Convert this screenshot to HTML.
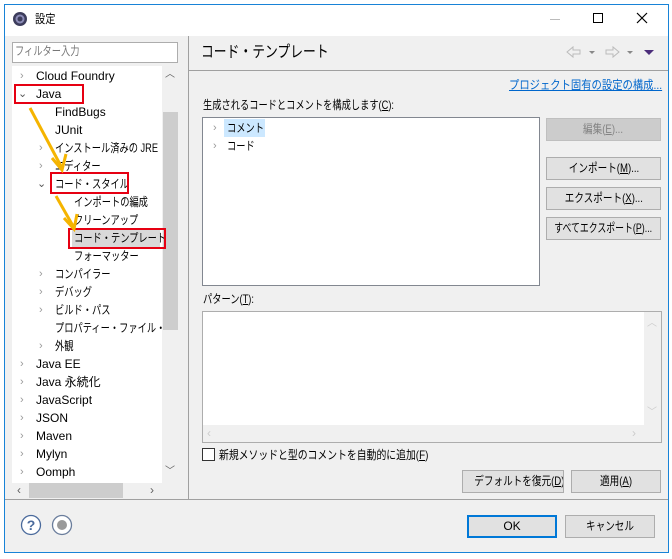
<!DOCTYPE html>
<html><head><meta charset="utf-8"><style>
*{margin:0;padding:0;box-sizing:border-box}
body{width:672px;height:559px;background:#fff;position:relative;overflow:hidden;font-family:"Liberation Sans","Noto Sans CJK JP",sans-serif;font-size:12px;color:#000}
.a{position:absolute}
.win{left:4px;top:4px;width:665px;height:549px;border:1px solid #1883d7;background:#f0f0f0}
.btn{position:absolute;background:#e1e1e1;border:1px solid #adadad;text-align:center;line-height:20px;font-size:12px;white-space:nowrap;overflow:hidden}
.btn span{display:inline-block;transform:scaleX(.8);transform-origin:center}
.t{position:absolute;white-space:nowrap;line-height:18px;transform:scaleX(.77);transform-origin:left}
.l{transform:none}
.ch{position:absolute;color:#999;font-size:11px;line-height:18px}
.rb{position:absolute;border:2px solid #e60012}
u{text-decoration:underline}
</style></head><body>
<div class="a win"></div>
<div class="a" style="left:5px;top:5px;width:663px;height:31px;background:#fff"></div>
<svg class="a" style="left:12px;top:11px" width="16" height="16"><circle cx="8" cy="8" r="7" fill="#3d3d5c"/><circle cx="8" cy="8" r="4.5" fill="#8d8db8"/><circle cx="8" cy="8" r="2.5" fill="#3d3d5c"/></svg>
<div class="t" style="left:35px;top:10px;transform:scaleX(.85)">設定</div>
<div class="a" style="left:550px;top:19px;width:10px;height:1px;background:#bbb"></div>
<div class="a" style="left:593px;top:13px;width:10px;height:10px;border:1px solid #000"></div>
<svg class="a" style="left:636px;top:12px" width="12" height="12"><path d="M1 1L11 11M11 1L1 11" stroke="#000" stroke-width="1.2"/></svg>
<!-- left -->
<div class="a" style="left:12px;top:42px;width:166px;height:21px;border:1px solid #adadad;background:#fff"></div>
<div class="t" style="left:15px;top:42px;color:#777">フィルター入力</div>
<div class="a" style="left:12px;top:66px;width:150px;height:417px;background:#fff"></div>
<div class="a" style="left:162px;top:66px;width:16px;height:417px;background:#f0f0f0"></div>
<div class="a" style="left:163px;top:112px;width:15px;height:218px;background:#cdcdcd"></div>
<div class="t l" style="left:165px;top:66px;color:#606060;font-size:10px">︿</div>
<div class="t l" style="left:165px;top:463px;color:#606060;font-size:10px">﹀</div>
<div class="a" style="left:12px;top:483px;width:166px;height:15px;background:#f0f0f0"></div>
<div class="a" style="left:29px;top:483px;width:94px;height:15px;background:#cdcdcd"></div>
<div class="t l" style="left:17px;top:481px;color:#606060">‹</div>
<div class="t l" style="left:150px;top:481px;color:#606060">›</div>
<div class="a" style="left:188px;top:36px;width:1px;height:463px;background:#a0a0a0"></div>
<div class="ch" style="left:20px;top:67px">›</div><div class="t l" style="left:36px;top:67px">Cloud Foundry</div>
<div class="ch" style="left:18px;top:85px;color:#555">⌄</div><div class="t l" style="left:36px;top:85px">Java</div>
<div class="t l" style="left:55px;top:103px">FindBugs</div>
<div class="t l" style="left:55px;top:121px">JUnit</div>
<div class="ch" style="left:39px;top:139px">›</div><div class="t" style="left:55px;top:139px">インストール済みの JRE</div>
<div class="ch" style="left:39px;top:157px">›</div><div class="t" style="left:55px;top:157px">エディター</div>
<div class="ch" style="left:37px;top:175px;color:#555">⌄</div><div class="t" style="left:55px;top:175px">コード・スタイル</div>
<div class="t" style="left:74px;top:193px">インポートの編成</div>
<div class="t" style="left:74px;top:211px">クリーンアップ</div>
<div class="a" style="left:72px;top:230px;width:88px;height:17px;background:#d9d9d9"></div>
<div class="t" style="left:74px;top:229px">コード・テンプレート</div>
<div class="t" style="left:74px;top:247px">フォーマッター</div>
<div class="ch" style="left:39px;top:265px">›</div><div class="t" style="left:55px;top:265px">コンパイラー</div>
<div class="ch" style="left:39px;top:283px">›</div><div class="t" style="left:55px;top:283px">デバッグ</div>
<div class="ch" style="left:39px;top:301px">›</div><div class="t" style="left:55px;top:301px">ビルド・パス</div>
<div class="t" style="left:55px;top:319px;width:139px;overflow:hidden">プロパティー・ファイル・エディター</div>
<div class="ch" style="left:39px;top:337px">›</div><div class="t" style="left:55px;top:337px">外観</div>
<div class="ch" style="left:20px;top:355px">›</div><div class="t l" style="left:36px;top:355px">Java EE</div>
<div class="ch" style="left:20px;top:373px">›</div><div class="t l" style="left:36px;top:373px">Java 永続化</div>
<div class="ch" style="left:20px;top:391px">›</div><div class="t l" style="left:36px;top:391px">JavaScript</div>
<div class="ch" style="left:20px;top:409px">›</div><div class="t l" style="left:36px;top:409px">JSON</div>
<div class="ch" style="left:20px;top:427px">›</div><div class="t l" style="left:36px;top:427px">Maven</div>
<div class="ch" style="left:20px;top:445px">›</div><div class="t l" style="left:36px;top:445px">Mylyn</div>
<div class="ch" style="left:20px;top:463px">›</div><div class="t l" style="left:36px;top:463px">Oomph</div>
<div class="rb" style="left:14px;top:84px;width:70px;height:20px"></div>
<div class="rb" style="left:50px;top:172px;width:79px;height:22px"></div>
<div class="rb" style="left:68px;top:228px;width:98px;height:21px"></div>
<svg class="a" style="left:0;top:0" width="200" height="260"><g stroke="#f5b400" stroke-width="3" fill="none"><path d="M30 108L62 168"/><path d="M52 158L62 170L66 154"/><path d="M56 196L73 226"/><path d="M64 218L74 229L77 214"/></g></svg>
<!-- right -->
<div class="t" style="left:201px;top:43px;font-size:16px;line-height:20px;transform:scaleX(.8)">コード・テンプレート</div>
<svg class="a" style="left:565px;top:45px" width="95" height="14"><path d="M2 7L8 2V5H15V9H8V12Z" fill="none" stroke="#bbb"/><path d="M24 6H30L27 9Z" fill="#888"/><path d="M54 7L48 2V5H41V9H48V12Z" fill="none" stroke="#bbb"/><path d="M62 6H68L65 9Z" fill="#888"/><path d="M79 5H89L84 10Z" fill="#4b2d7a"/></svg>
<div class="a" style="left:189px;top:70px;width:479px;height:1px;background:#a0a0a0"></div>
<div class="t" style="left:509px;top:76px;color:#0066cc;text-decoration:underline;transform:scaleX(.86)">プロジェクト固有の設定の構成...</div>
<div class="t" style="left:203px;top:96px">生成されるコードとコメントを構成します(<u>C</u>):</div>
<div class="a" style="left:202px;top:117px;width:338px;height:169px;border:1px solid #828790;background:#fff"></div>
<div class="ch" style="left:213px;top:119px">›</div>
<div class="a" style="left:224px;top:119px;width:41px;height:18px;background:#cce8ff"></div>
<div class="t" style="left:227px;top:119px">コメント</div>
<div class="ch" style="left:213px;top:137px">›</div><div class="t" style="left:227px;top:137px">コード</div>
<div class="btn" style="left:546px;top:118px;width:115px;height:23px;background:#ccc;border-color:#bfbfbf;color:#838383"><span>編集(<u>E</u>)...</span></div>
<div class="btn" style="left:546px;top:157px;width:115px;height:23px"><span>インポート(<u>M</u>)...</span></div>
<div class="btn" style="left:546px;top:187px;width:115px;height:23px"><span>エクスポート(<u>X</u>)...</span></div>
<div class="btn" style="left:546px;top:217px;width:115px;height:23px;overflow:visible"><span style="transform:scaleX(.74);margin:0 -30px">すべてエクスポート(<u>P</u>)...</span></div>
<div class="t" style="left:203px;top:290px">パターン(<u>T</u>):</div>
<div class="a" style="left:202px;top:311px;width:460px;height:132px;border:1px solid #adadad;background:#fff"></div>
<div class="a" style="left:203px;top:425px;width:458px;height:17px;background:#f0f0f0"></div>
<div class="a" style="left:644px;top:312px;width:17px;height:130px;background:#f0f0f0"></div>
<div class="t l" style="left:647px;top:315px;color:#ccc;font-size:10px">︿</div>
<div class="t l" style="left:647px;top:404px;color:#ccc;font-size:10px">﹀</div>
<div class="t l" style="left:207px;top:424px;color:#ccc">‹</div>
<div class="t l" style="left:632px;top:424px;color:#ccc">›</div>
<div class="a" style="left:202px;top:448px;width:13px;height:13px;border:1px solid #333;background:#fff"></div>
<div class="t" style="left:219px;top:446px;transform:scaleX(.82)">新規メソッドと型のコメントを自動的に追加(<u>F</u>)</div>
<div class="btn" style="left:462px;top:470px;width:102px;height:23px"><span style="transform:scaleX(.8)">デフォルトを復元(<u>D</u>)</span></div>
<div class="btn" style="left:571px;top:470px;width:90px;height:23px"><span>適用(<u>A</u>)</span></div>
<div class="a" style="left:5px;top:499px;width:663px;height:1px;background:#a0a0a0"></div>
<svg class="a" style="left:20px;top:513px" width="60" height="24"><circle cx="11" cy="12" r="9.5" fill="#fff" stroke="#4a6a9c" stroke-width="1.3"/><text x="11" y="17" text-anchor="middle" font-family="Liberation Sans" font-weight="bold" font-size="14" fill="#4a6a9c">?</text><circle cx="42" cy="12" r="9.5" fill="#fff" stroke="#6a7d9c" stroke-width="1.3"/><circle cx="42" cy="12" r="5" fill="#9a9a9a"/></svg>
<div class="btn" style="left:467px;top:515px;width:90px;height:23px;border:2px solid #0078d7;line-height:19px">OK</div>
<div class="btn" style="left:565px;top:515px;width:90px;height:23px"><span>キャンセル</span></div>
</body></html>
